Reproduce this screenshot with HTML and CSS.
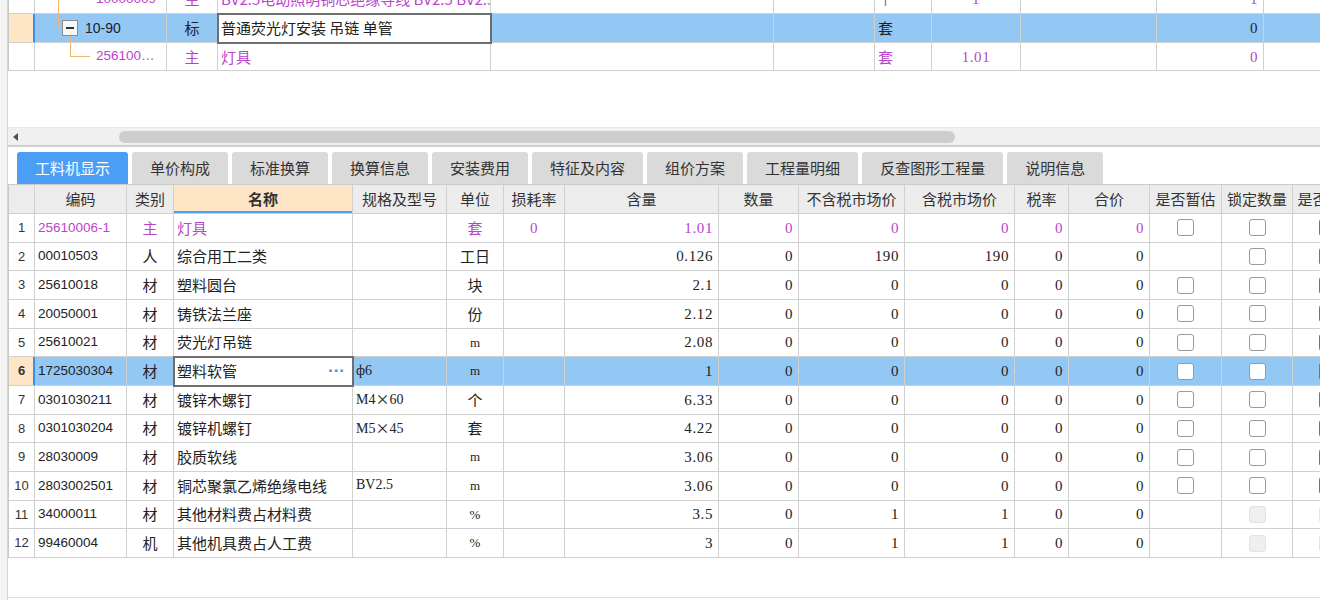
FILE: index.html
```html
<!DOCTYPE html>
<html lang="zh-CN">
<head>
<meta charset="utf-8">
<title>工料机显示</title>
<link rel="stylesheet" href="styles.css">
</head>
<body>
<div class="app">
  <div class="edge"></div>
  <div class="main">
    <div class="top">
      <table class="tt">
        <colgroup>
          <col class="w26"><col class="w132"><col class="w51"><col class="w273"><col class="w283"><col class="w101"><col class="w57"><col class="w89"><col class="w136"><col class="w107"><col class="w120">
        </colgroup>
        <tr class="ra">
          <td></td>
          <td class="tree"><div class="tc"><span class="sp23"></span><span class="vl"></span><span class="cd p ml37">10000009</span></div></td>
          <td class="c p">主</td>
          <td class="p nm">BV2.5电动照明铜芯绝缘导线 BV2.5 BV2.5</td>
          <td></td>
          <td></td>
          <td class="p">个</td>
          <td class="c n p">1</td>
          <td></td>
          <td class="n p">1</td>
          <td></td>
        </tr>
        <tr class="rb sel">
          <td class="rn cur"></td>
          <td class="tree"><div class="tc"><span class="sp23"></span><span class="elb"></span><span class="boxcol"><span class="fill"></span><span class="tbox"><span class="minus"></span></span><span class="fill ln"></span></span><span class="tcode ml7">10-90</span></div></td>
          <td class="c">标</td>
          <td class="nm ed">普通荧光灯安装 吊链 单管</td>
          <td></td>
          <td></td>
          <td>套</td>
          <td></td>
          <td></td>
          <td class="n">0</td>
          <td></td>
        </tr>
        <tr class="rc">
          <td></td>
          <td class="tree"><div class="tc tc27"><span class="sp35"></span><span class="elb2"></span><span class="cd p ml6">256100…</span></div></td>
          <td class="c p">主</td>
          <td class="p nm">灯具</td>
          <td></td>
          <td></td>
          <td class="p">套</td>
          <td class="c n p">1.01</td>
          <td></td>
          <td class="n p">0</td>
          <td></td>
        </tr>
      </table>
    </div>

    <div class="gap"></div>

    <div class="hscroll"><span class="arrow"></span><span class="thumb"></span></div>

    <div class="tabs">
      <div class="tab on">工料机显示</div>
      <div class="tab">单价构成</div>
      <div class="tab">标准换算</div>
      <div class="tab">换算信息</div>
      <div class="tab">安装费用</div>
      <div class="tab">特征及内容</div>
      <div class="tab">组价方案</div>
      <div class="tab">工程量明细</div>
      <div class="tab">反查图形工程量</div>
      <div class="tab">说明信息</div>
    </div>

    <table class="bt">
      <colgroup>
        <col class="w26"><col class="w92"><col class="w47"><col class="w179"><col class="w94"><col class="w57"><col class="w61"><col class="w154"><col class="w80"><col class="w106"><col class="w110"><col class="w54"><col class="w81"><col class="w72"><col class="w71"><col class="w70">
      </colgroup>
      <tr class="hd">
        <td></td><td>编码</td><td>类别</td><td class="hs">名称</td><td>规格及型号</td><td>单位</td><td>损耗率</td><td>含量</td><td>数量</td><td>不含税市场价</td><td>含税市场价</td><td>税率</td><td>合价</td><td>是否暂估</td><td>锁定数量</td><td>是否暂估</td>
      </tr>
      <tr class="dr">
        <td class="rn">1</td><td class="cd p">25610006-1</td><td class="c p">主</td><td class="p">灯具</td><td></td><td class="c p">套</td><td class="c n p">0</td><td class="n p">1.01</td><td class="n p">0</td><td class="n p">0</td><td class="n p">0</td><td class="n p">0</td><td class="n p">0</td><td class="cbc"><span class="cb"></span></td><td class="cbc"><span class="cb"></span></td><td class="cbc"><span class="cb bl"></span></td>
      </tr>
      <tr class="dr">
        <td class="rn">2</td><td class="cd">00010503</td><td class="c">人</td><td>综合用工二类</td><td></td><td class="c">工日</td><td></td><td class="n">0.126</td><td class="n">0</td><td class="n">190</td><td class="n">190</td><td class="n">0</td><td class="n">0</td><td class="cbc"></td><td class="cbc"><span class="cb"></span></td><td class="cbc"><span class="cb bl"></span></td>
      </tr>
      <tr class="dr">
        <td class="rn">3</td><td class="cd">25610018</td><td class="c">材</td><td>塑料圆台</td><td></td><td class="c">块</td><td></td><td class="n">2.1</td><td class="n">0</td><td class="n">0</td><td class="n">0</td><td class="n">0</td><td class="n">0</td><td class="cbc"><span class="cb"></span></td><td class="cbc"><span class="cb"></span></td><td class="cbc"><span class="cb bl"></span></td>
      </tr>
      <tr class="dr">
        <td class="rn">4</td><td class="cd">20050001</td><td class="c">材</td><td>铸铁法兰座</td><td></td><td class="c">份</td><td></td><td class="n">2.12</td><td class="n">0</td><td class="n">0</td><td class="n">0</td><td class="n">0</td><td class="n">0</td><td class="cbc"><span class="cb"></span></td><td class="cbc"><span class="cb"></span></td><td class="cbc"><span class="cb bl"></span></td>
      </tr>
      <tr class="dr">
        <td class="rn">5</td><td class="cd">25610021</td><td class="c">材</td><td>荧光灯吊链</td><td></td><td class="c u">m</td><td></td><td class="n">2.08</td><td class="n">0</td><td class="n">0</td><td class="n">0</td><td class="n">0</td><td class="n">0</td><td class="cbc"><span class="cb"></span></td><td class="cbc"><span class="cb"></span></td><td class="cbc"><span class="cb bl"></span></td>
      </tr>
      <tr class="dr sel">
        <td class="rn cur">6</td><td class="cd">1725030304</td><td class="c">材</td><td class="ed"><div class="edi"><span>塑料软管</span><span class="dots">···</span></div></td><td class="spc">ф6</td><td class="c u">m</td><td></td><td class="n">1</td><td class="n">0</td><td class="n">0</td><td class="n">0</td><td class="n">0</td><td class="n">0</td><td class="cbc"><span class="cb"></span></td><td class="cbc"><span class="cb"></span></td><td class="cbc"><span class="cb bl"></span></td>
      </tr>
      <tr class="dr">
        <td class="rn">7</td><td class="cd">0301030211</td><td class="c">材</td><td>镀锌木螺钉</td><td class="spc">M4<span class="x">×</span>60</td><td class="c">个</td><td></td><td class="n">6.33</td><td class="n">0</td><td class="n">0</td><td class="n">0</td><td class="n">0</td><td class="n">0</td><td class="cbc"><span class="cb"></span></td><td class="cbc"><span class="cb"></span></td><td class="cbc"><span class="cb bl"></span></td>
      </tr>
      <tr class="dr">
        <td class="rn">8</td><td class="cd">0301030204</td><td class="c">材</td><td>镀锌机螺钉</td><td class="spc">M5<span class="x">×</span>45</td><td class="c">套</td><td></td><td class="n">4.22</td><td class="n">0</td><td class="n">0</td><td class="n">0</td><td class="n">0</td><td class="n">0</td><td class="cbc"><span class="cb"></span></td><td class="cbc"><span class="cb"></span></td><td class="cbc"><span class="cb bl"></span></td>
      </tr>
      <tr class="dr">
        <td class="rn">9</td><td class="cd">28030009</td><td class="c">材</td><td>胶质软线</td><td></td><td class="c u">m</td><td></td><td class="n">3.06</td><td class="n">0</td><td class="n">0</td><td class="n">0</td><td class="n">0</td><td class="n">0</td><td class="cbc"><span class="cb"></span></td><td class="cbc"><span class="cb"></span></td><td class="cbc"><span class="cb bl"></span></td>
      </tr>
      <tr class="dr">
        <td class="rn">10</td><td class="cd">2803002501</td><td class="c">材</td><td>铜芯聚氯乙烯绝缘电线</td><td class="spc">BV2.5</td><td class="c u">m</td><td></td><td class="n">3.06</td><td class="n">0</td><td class="n">0</td><td class="n">0</td><td class="n">0</td><td class="n">0</td><td class="cbc"><span class="cb"></span></td><td class="cbc"><span class="cb"></span></td><td class="cbc"><span class="cb bl"></span></td>
      </tr>
      <tr class="dr">
        <td class="rn">11</td><td class="cd">34000011</td><td class="c">材</td><td>其他材料费占材料费</td><td></td><td class="c u">%</td><td></td><td class="n">3.5</td><td class="n">0</td><td class="n">1</td><td class="n">1</td><td class="n">0</td><td class="n">0</td><td class="cbc"></td><td class="cbc"><span class="cb dis"></span></td><td class="cbc"><span class="cb dis"></span></td>
      </tr>
      <tr class="dr">
        <td class="rn">12</td><td class="cd">99460004</td><td class="c">机</td><td>其他机具费占人工费</td><td></td><td class="c u">%</td><td></td><td class="n">3</td><td class="n">0</td><td class="n">1</td><td class="n">1</td><td class="n">0</td><td class="n">0</td><td class="cbc"></td><td class="cbc"><span class="cb dis"></span></td><td class="cbc"><span class="cb dis"></span></td>
      </tr>
    </table>
  </div>
</div>
</body>
</html>
```

FILE: styles.css
```css
* { box-sizing: border-box; margin: 0; padding: 0; }
html, body { width: 1320px; height: 600px; overflow: hidden; background: #fff; }
body {
  font-family: "Noto Sans CJK SC", "Noto Sans", sans-serif;
  font-size: 15px;
  color: #222;
  line-height: 1.2;
}

.app { display: flex; height: 600px; }
.edge { flex: none; width: 8px; background: #f4f4f4; border-right: 1px solid #d6d6d6; }
.main {
  flex: 1; min-width: 0; height: 598px;
  display: flex; flex-direction: column;
  overflow: hidden;
  border-bottom: 1px solid #dedede;
}

/* top tree grid */
.top {
  flex: none; height: 71px; overflow: hidden;
  display: flex; flex-direction: column; justify-content: flex-end;
}
.gap { flex: none; height: 56px; }

/* horizontal scrollbar */
.hscroll {
  flex: none; height: 20px;
  background: #f0f0f0;
  border-top: 1px solid #e6e6e6;
  border-bottom: 2px solid #cfcfcf;
  display: flex; align-items: center;
}
.arrow {
  width: 0; height: 0;
  border-top: 4px solid transparent;
  border-bottom: 4px solid transparent;
  border-right: 5px solid #505050;
  margin-left: 5px;
}
.thumb { margin-left: 101px; width: 836px; height: 12px; border-radius: 6px; background: #cdcdcd; }

/* tabs */
.tabs { flex: none; display: flex; gap: 4px; padding: 5px 0 0 9px; }
.tab {
  height: 32px; padding: 0 18px;
  background: #dadada; color: #333;
  border-radius: 3px 3px 0 0;
  display: flex; align-items: center;
  white-space: nowrap;
}
.tab.on { background: #4a9ef5; color: #fff; }

/* tables */
table { border-collapse: separate; border-spacing: 0; table-layout: fixed; flex: none; }
.tt { width: 1376px; border-left: 1px solid #c9c9c9; }
.bt { width: 1355px; border-left: 1px solid #c9c9c9; border-top: 1px solid #c9c9c9; }
td {
  border-right: 1px solid #d0d0d0;
  border-bottom: 1px solid #d0d0d0;
  white-space: nowrap; overflow: hidden;
  padding: 0 3px;
  vertical-align: middle;
}

.w26 { width: 26px; } .w132 { width: 132px; } .w51 { width: 51px; } .w273 { width: 273px; }
.w283 { width: 283px; } .w101 { width: 101px; } .w57 { width: 57px; } .w89 { width: 89px; }
.w136 { width: 136px; } .w107 { width: 107px; } .w120 { width: 120px; }
.w92 { width: 92px; } .w47 { width: 47px; } .w179 { width: 179px; } .w94 { width: 94px; }
.w61 { width: 61px; } .w154 { width: 154px; } .w80 { width: 80px; } .w106 { width: 106px; }
.w110 { width: 110px; } .w54 { width: 54px; } .w81 { width: 81px; } .w72 { width: 72px; }
.w71 { width: 71px; } .w70 { width: 70px; }

.ra td, .rb td { height: 29px; }
.rc td { height: 28px; }
.hd td {
  height: 29px; background: #ececec; color: #333;
  text-align: center; padding: 0 2px;
}
.hd td.hs { background: #fde5c6; font-weight: bold; box-shadow: inset 0 -2px 0 #4a9ef5; }
.dr td { height: 28.67px; }

.sel td { background: #93c8f5; }
td.rn {
  text-align: center; padding: 0;
  font-family: "Liberation Sans", sans-serif; font-size: 13px; color: #333;
}
.sel td.cur {
  background: #fde5c6; font-weight: bold;
  border-right-color: #3b8ff0;
  box-shadow: inset -1px 0 0 #3b8ff0;
}

.c { text-align: center; }
.p { color: #bb44cc; }
.cd { font-family: "Liberation Sans", "Noto Sans CJK SC", sans-serif; font-size: 13.5px; }
.tcode { font-family: "Liberation Sans", sans-serif; font-size: 14px; color: #222; }
.n {
  text-align: right;
  font-family: "Liberation Serif", serif; font-size: 15px;
  letter-spacing: 0.6px;
  padding-right: 5px;
}
.c.n { text-align: center; padding-right: 3px; }
.u { font-family: "Liberation Serif", serif; font-size: 13px; }
.spc { font-family: "Liberation Serif", "Noto Sans CJK SC", serif; font-size: 14px; }
.x { font-family: "Noto Sans CJK SC", sans-serif; font-size: 14px; }
.nm { padding-left: 3px; }

/* editors */
td.ed {
  background: #fff !important;
  outline: 2px solid #6e6e6e;
  outline-offset: -1px;
}
.edi { display: flex; justify-content: space-between; align-items: center; }
.dots {
  color: #3d8fe6; font-family: "Liberation Sans", sans-serif;
  font-weight: bold; font-size: 17px; letter-spacing: 0;
  padding-right: 4px;
}

/* tree */
td.tree { padding: 0; }
.tc { display: flex; align-items: center; height: 28px; }
.tc27 { height: 27px; }
.sp23 { flex: none; width: 23px; }
.sp35 { flex: none; width: 35px; }
.vl { flex: none; width: 1px; align-self: stretch; background: #f2b467; }
.elb {
  flex: none; align-self: flex-start;
  width: 4px; height: 14px;
  border-left: 1px solid #f2b467; border-bottom: 1px solid #f2b467;
}
.elb2 {
  flex: none; align-self: flex-start;
  width: 20px; height: 14px;
  border-left: 1px solid #f2b467; border-bottom: 1px solid #f2b467;
}
.boxcol { flex: none; align-self: stretch; width: 16px; display: flex; flex-direction: column; }
.fill { flex: 1; }
.fill.ln { width: 9px; border-right: 1px solid #f2b467; }
.tbox {
  flex: none; width: 16px; height: 16px;
  border: 1px solid #8c8c8c; background: #f7f7f7;
  display: flex; align-items: center; justify-content: center;
}
.minus { width: 8px; height: 2px; background: #333; }
.ml37 { margin-left: 37px; }
.ml7 { margin-left: 7px; }
.ml6 { margin-left: 6px; }

/* checkboxes */
td.cbc { text-align: center; padding: 0; font-size: 0; }
.cb {
  display: inline-block; vertical-align: middle;
  width: 17px; height: 17px;
  border: 1px solid #9a9a9a; border-radius: 3px; background: #fff;
}
.cb.bl { border: 2px solid #2f80e6; }
.cb.dis { background: #efefef; border-color: #e2e2e2; }
```
